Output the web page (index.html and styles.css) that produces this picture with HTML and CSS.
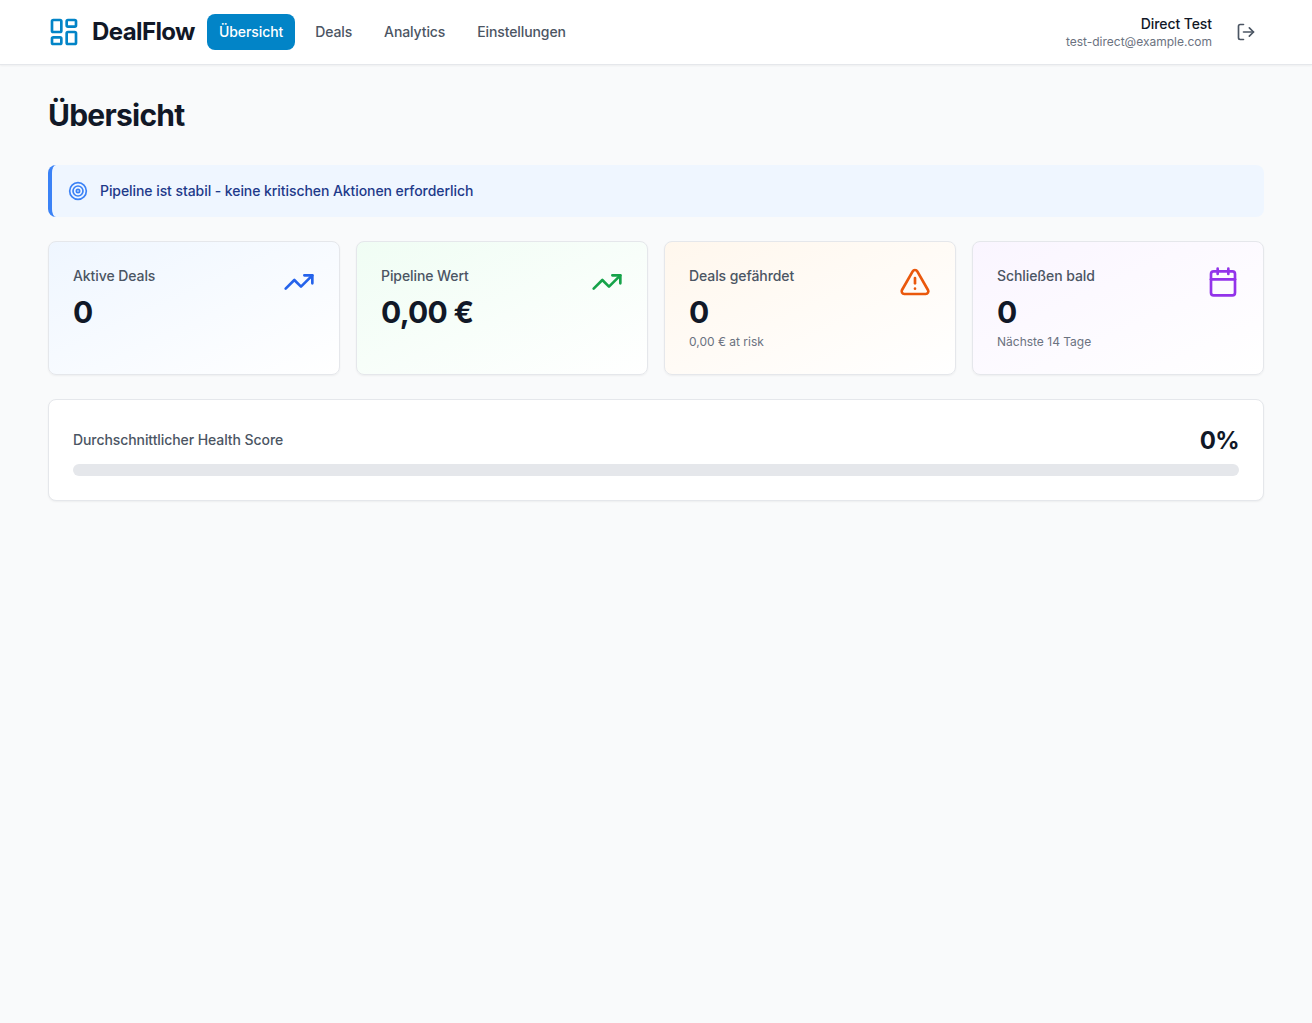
FILE: index.html
```html
<!DOCTYPE html>
<html lang="de">
<head>
<meta charset="utf-8">
<title>DealFlow</title>
<link rel="stylesheet" href="styles.css">
</head>
<body>
<header class="topbar">
  <div class="brand-nav">
    <svg class="icon logo" viewBox="0 0 24 24"><rect x="3" y="3" width="7" height="9" rx="1"/><rect x="14" y="3" width="7" height="5" rx="1"/><rect x="14" y="12" width="7" height="9" rx="1"/><rect x="3" y="16" width="7" height="5" rx="1"/></svg>
    <span class="brand">DealFlow</span>
    <nav class="nav">
      <a class="nav-item active">Übersicht</a>
      <a class="nav-item">Deals</a>
      <a class="nav-item">Analytics</a>
      <a class="nav-item">Einstellungen</a>
    </nav>
  </div>
  <div class="user-area">
    <div class="user">
      <div class="user-name">Direct Test</div>
      <div class="user-mail">test-direct@example.com</div>
    </div>
    <button class="logout" type="button">
      <svg class="icon logout-icon" viewBox="0 0 24 24"><path d="M9 21H5a2 2 0 0 1-2-2V5a2 2 0 0 1 2-2h4"/><polyline points="16 17 21 12 16 7"/><line x1="21" y1="12" x2="9" y2="12"/></svg>
    </button>
  </div>
</header>
<main class="main">
  <h1 class="title">Übersicht</h1>
  <div class="alert">
    <svg class="icon alert-icon" viewBox="0 0 24 24"><circle cx="12" cy="12" r="10"/><circle cx="12" cy="12" r="6"/><circle cx="12" cy="12" r="2"/></svg>
    <span>Pipeline ist stabil - keine kritischen Aktionen erforderlich</span>
  </div>
  <section class="stats">
    <article class="card stat blue">
      <div>
        <div class="label">Aktive Deals</div>
        <div class="value">0</div>
      </div>
      <svg class="icon stat-icon" viewBox="0 0 24 24"><polyline points="22 7 13.5 15.5 8.5 10.5 2 17"/><polyline points="16 7 22 7 22 13"/></svg>
    </article>
    <article class="card stat green">
      <div>
        <div class="label">Pipeline Wert</div>
        <div class="value">0,00 €</div>
      </div>
      <svg class="icon stat-icon" viewBox="0 0 24 24"><polyline points="22 7 13.5 15.5 8.5 10.5 2 17"/><polyline points="16 7 22 7 22 13"/></svg>
    </article>
    <article class="card stat orange">
      <div>
        <div class="label">Deals gefährdet</div>
        <div class="value">0</div>
        <div class="sub">0,00 € at risk</div>
      </div>
      <svg class="icon stat-icon" viewBox="0 0 24 24"><path d="m21.73 18-8-14a2 2 0 0 0-3.48 0l-8 14A2 2 0 0 0 4 21h16a2 2 0 0 0 1.73-3"/><path d="M12 9v4"/><path d="M12 17h.01"/></svg>
    </article>
    <article class="card stat purple">
      <div>
        <div class="label">Schließen bald</div>
        <div class="value">0</div>
        <div class="sub">Nächste 14 Tage</div>
      </div>
      <svg class="icon stat-icon" viewBox="0 0 24 24"><path d="M8 2v4"/><path d="M16 2v4"/><rect x="3" y="4" width="18" height="18" rx="2"/><path d="M3 10h18"/></svg>
    </article>
  </section>
  <section class="card health">
    <div class="health-row">
      <span class="label">Durchschnittlicher Health Score</span>
      <span class="score">0%</span>
    </div>
    <div class="track"></div>
  </section>
</main>
</body>
</html>
```
FILE: styles.css
```css
* { box-sizing: border-box; }
html, body { margin: 0; padding: 0; }
body {
  min-height: 1023px;
  background: #f9fafb;
  color: #111827;
  font-family: Inter, "Liberation Sans", sans-serif;
}
.icon {
  fill: none;
  stroke: currentColor;
  stroke-width: 2;
  stroke-linecap: round;
  stroke-linejoin: round;
  flex: none;
  display: block;
}
.topbar {
  height: 65px;
  padding: 0 48px;
  display: flex;
  align-items: center;
  justify-content: space-between;
  background: #fff;
  border-bottom: 1px solid #e5e7eb;
  box-shadow: 0 1px 2px rgba(0, 0, 0, .05);
}
.brand-nav { display: flex; align-items: center; }
.logo { width: 32px; height: 32px; color: #0284c7; }
.brand {
  margin-left: 12px;
  font-size: 24px;
  line-height: 32px;
  font-weight: 700;
  letter-spacing: -0.6px;
  color: #111827;
}
.nav { display: flex; gap: 8px; margin-left: 12px; }
.nav-item {
  padding: 8px 12px;
  height: 36px;
  border-radius: 8px;
  font-size: 14px;
  line-height: 20px;
  font-weight: 500;
  letter-spacing: -0.11px;
  color: #4b5563;
}
.nav-item.active { background: #0284c7; color: #fff; letter-spacing: -0.08px; }
.user-area { display: flex; align-items: center; gap: 16px; }
.user { text-align: right; }
.user-name { font-size: 14px; line-height: 20px; font-weight: 500; letter-spacing: -0.08px; color: #111827; }
.user-mail { font-size: 12px; line-height: 16px; color: #6b7280; }
.logout {
  padding: 8px;
  border: 0;
  background: transparent;
  color: #4b5563;
  border-radius: 8px;
}
.logout-icon { width: 20px; height: 20px; }
.main { padding: 32px 48px; }
.title {
  margin: 0 0 32px;
  font-size: 30px;
  line-height: 36px;
  font-weight: 700;
  letter-spacing: -0.75px;
  color: #111827;
}
.alert {
  display: flex;
  align-items: center;
  gap: 12px;
  padding: 16px;
  margin-bottom: 24px;
  background: #eff6ff;
  border-left: 4px solid #3b82f6;
  border-radius: 8px;
  font-size: 14px;
  line-height: 20px;
  font-weight: 500;
  letter-spacing: -0.07px;
  color: #1e3a8a;
}
.alert-icon { width: 20px; height: 20px; color: #3b82f6; }
.stats {
  display: grid;
  grid-template-columns: repeat(4, 1fr);
  gap: 16px;
  margin-bottom: 24px;
}
.card {
  padding: 24px;
  background: #fff;
  border: 1px solid #e5e7eb;
  border-radius: 8px;
  box-shadow: 0 1px 2px rgba(0, 0, 0, .05);
}
.stat { display: flex; justify-content: space-between; align-items: flex-start; }
.blue { background: linear-gradient(to bottom right, #eff6ff, #fff); }
.green { background: linear-gradient(to bottom right, #f0fdf4, #fff); }
.orange { background: linear-gradient(to bottom right, #fff7ed, #fff); }
.purple { background: linear-gradient(to bottom right, #faf5ff, #fff); }
.label { font-size: 14px; line-height: 20px; font-weight: 500; letter-spacing: -0.08px; color: #4b5563; }
.value {
  margin-top: 8px;
  font-size: 30px;
  line-height: 36px;
  font-weight: 700;
  letter-spacing: -0.7px;
  color: #111827;
}
.sub { margin-top: 4px; font-size: 12px; line-height: 16px; color: #6b7280; }
.stat-icon { width: 32px; height: 32px; }
.blue .stat-icon { color: #2563eb; }
.green .stat-icon { color: #16a34a; }
.orange .stat-icon { color: #ea580c; }
.purple .stat-icon { color: #9333ea; }
.health-row {
  display: flex;
  align-items: center;
  justify-content: space-between;
  margin-bottom: 8px;
}
.score { padding-top: 2px; font-size: 24px; line-height: 30px; font-weight: 700; letter-spacing: -0.6px; color: #111827; }
.track { height: 12px; border-radius: 9999px; background: #e5e7eb; }
```
